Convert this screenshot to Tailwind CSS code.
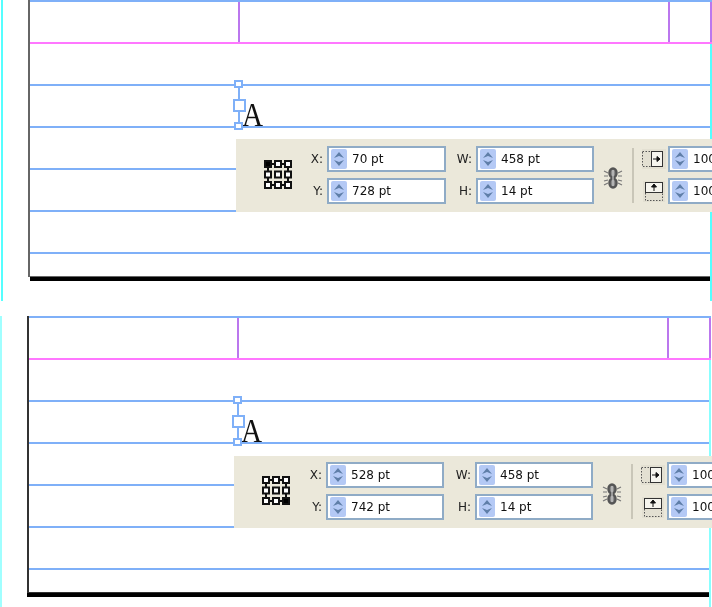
<!DOCTYPE html>
<html>
<head>
<meta charset="utf-8">
<script src="https://cdn.jsdelivr.net/npm/@tailwindcss/browser@4"></script>
</head>
<body class="bg-white">
<div class="w-[712px] h-[607px] overflow-hidden bg-white font-['DejaVu_Sans',sans-serif]">

<!-- SPREAD 1 -->
<section class="relative h-[316px] flex items-start overflow-hidden">
  <div class="ml-px w-[2px] h-[301px] bg-[#55ffff] shrink-0"></div>
  <div class="ml-[25px] w-[700px] h-[277px] shrink-0 border-l-2 border-b border-[#666666] shadow-[2px_4px_0_#000] flex flex-col gap-[40px]">
    <div class="h-[44px] flex flex-col">
      <div class="h-[2px] bg-[#7fb0f8]"></div>
      <div class="h-[40px] flex">
        <div class="w-[208px]"></div><div class="w-[2px] bg-[#bb77ee]"></div>
        <div class="w-[428px]"></div><div class="w-[2px] bg-[#bb77ee]"></div>
        <div class="w-[40px]"></div><div class="w-[2px] bg-[#bb77ee]"></div>
      </div>
      <div class="h-[2px] bg-[#ff77ff] shrink-0"></div>
    </div>
    <div class="h-[2px] bg-[#7fb0f8]"></div>
    <div class="h-[2px] bg-[#7fb0f8]"></div>
    <div class="h-[2px] bg-[#7fb0f8]"></div>
    <div class="h-[2px] bg-[#7fb0f8]"></div>
    <div class="h-[2px] bg-[#7fb0f8]"></div>
  </div>
  <div class="absolute left-[710px] top-[44px] w-[2px] h-[257px] bg-[#55ffff]"></div>

  <!-- selection handles and glyph -->
  <div class="absolute left-[238px] top-[84px] w-[2px] h-[42px] bg-[#7fb0f8]"></div>
  <div class="absolute left-[242px] top-[95px] origin-left scale-x-[0.86] text-[34px] leading-[40px] text-[#111] font-['Liberation_Serif',serif]">A</div>
  <div class="absolute left-[234px] top-[80px] w-[9px] h-[8px] border-2 border-[#7fb0f8] bg-white"></div>
  <div class="absolute left-[233px] top-[99px] w-[13px] h-[13px] border-2 border-[#7fb0f8] bg-white"></div>
  <div class="absolute left-[234px] top-[122px] w-[9px] h-[8px] border-2 border-[#7fb0f8] bg-white"></div>

  <!-- control panel -->
  <div class="absolute left-[236px] top-[139px] right-0 h-[73px] bg-[#ebe8da] pt-[7px] flex items-start overflow-hidden blur-[0.3px]">
    <svg class="ml-[28px] mt-[14px] shrink-0" width="29" height="29" viewBox="0 0 29 29">
      <path d="M4 4H24V25H4ZM4 14.500H8M20 14.500H24M14 4V8M14 21V25" fill="none" stroke="#111" stroke-width="2"/>
      <g fill="#fff" stroke="#111" stroke-width="2">
        <rect x="1" y="1" width="6" height="6" fill="#000"/><rect x="11" y="1" width="6" height="6"/><rect x="21" y="1" width="6" height="6"/>
        <rect x="1" y="11.500" width="6" height="6"/><rect x="11" y="11.500" width="6" height="6"/><rect x="21" y="11.500" width="6" height="6"/>
        <rect x="1" y="22" width="6" height="6"/><rect x="11" y="22" width="6" height="6"/><rect x="21" y="22" width="6" height="6"/>
      </g>
    </svg>
    <div class="flex flex-col gap-[6px] shrink-0 text-[12px] text-[#222]">
      <div class="flex items-center"><span class="w-[30px] text-right">X:</span><div class="ml-[4px] w-[119px] h-[26px] bg-white border-2 border-[#8fabc6] flex items-center pl-[2px]"><div class="w-[16px] h-[20px] rounded-[2px] bg-[#b4c9f5] flex items-center justify-center"><svg width="12" height="16" viewBox="0 0 12 16"><path d="M1 7 6 1 11 7 6 5ZM1 9 6 15 11 9 6 11Z" fill="#5f7ea8"/></svg></div><span class="ml-[5px] text-[#111]">70 pt</span></div></div>
      <div class="flex items-center"><span class="w-[30px] text-right">Y:</span><div class="ml-[4px] w-[119px] h-[26px] bg-white border-2 border-[#8fabc6] flex items-center pl-[2px]"><div class="w-[16px] h-[20px] rounded-[2px] bg-[#b4c9f5] flex items-center justify-center"><svg width="12" height="16" viewBox="0 0 12 16"><path d="M1 7 6 1 11 7 6 5ZM1 9 6 15 11 9 6 11Z" fill="#5f7ea8"/></svg></div><span class="ml-[5px] text-[#111]">728 pt</span></div></div>
    </div>
    <div class="flex flex-col gap-[6px] shrink-0 text-[12px] text-[#222]">
      <div class="flex items-center"><span class="w-[26px] text-right">W:</span><div class="ml-[4px] w-[118px] h-[26px] bg-white border-2 border-[#8fabc6] flex items-center pl-[2px]"><div class="w-[16px] h-[20px] rounded-[2px] bg-[#b4c9f5] flex items-center justify-center"><svg width="12" height="16" viewBox="0 0 12 16"><path d="M1 7 6 1 11 7 6 5ZM1 9 6 15 11 9 6 11Z" fill="#5f7ea8"/></svg></div><span class="ml-[5px] text-[#111]">458 pt</span></div></div>
      <div class="flex items-center"><span class="w-[26px] text-right">H:</span><div class="ml-[4px] w-[118px] h-[26px] bg-white border-2 border-[#8fabc6] flex items-center pl-[2px]"><div class="w-[16px] h-[20px] rounded-[2px] bg-[#b4c9f5] flex items-center justify-center"><svg width="12" height="16" viewBox="0 0 12 16"><path d="M1 7 6 1 11 7 6 5ZM1 9 6 15 11 9 6 11Z" fill="#5f7ea8"/></svg></div><span class="ml-[5px] text-[#111]">14 pt</span></div></div>
    </div>
    <svg class="ml-[9px] mt-[21px] shrink-0" width="20" height="22" viewBox="0 0 20 22">
      <g fill="#8a8a8a" stroke="#555" stroke-width="2.500"><ellipse cx="10" cy="6" rx="3.500" ry="4.500"/><ellipse cx="10" cy="16" rx="3.500" ry="4.500"/></g>
      <path d="M10 3V19" stroke="#ddd" stroke-width="1"/>
      <path d="M1 4 5 6M1 9H5M1 14 5 13M1 18 5 16M19 4 15 6M19 9H15M19 14 15 13M19 18 15 16" stroke="#777" stroke-width="1.200"/>
    </svg>
    <div class="ml-[9px] w-[2px] h-[55px] mt-[2px] bg-[#c9c6b8] shrink-0"></div>
    <div class="ml-[8px] w-[26px] flex flex-col shrink-0">
      <svg width="24" height="20" viewBox="0 0 24 20" class="mt-[3px]"><rect width="24" height="20" fill="#e3e0d2"/><rect x="0.500" y="2.500" width="10" height="15" fill="none" stroke="#555" stroke-dasharray="1.500 1.500"/><rect x="9.500" y="2.500" width="11" height="15" fill="#f6f5ee" stroke="#333"/><path d="M11 10H17M15 7.500 18 10 15 12.500Z" stroke="#111" fill="#111"/></svg>
      <svg width="22" height="21" viewBox="0 0 22 21" class="mt-[12px] ml-[1px]"><rect width="22" height="21" fill="#e3e0d2"/><rect x="2.500" y="11.500" width="17" height="8" fill="none" stroke="#555" stroke-dasharray="1.500 1.500"/><rect x="2.500" y="1.500" width="17" height="10" fill="#f6f5ee" stroke="#333"/><path d="M11 10V4M8.500 6 11 3 13.500 6Z" stroke="#111" fill="#111"/></svg>
    </div>
    <div class="flex flex-col gap-[6px] shrink-0 text-[12px] text-[#222]">
      <div class="w-[118px] h-[26px] bg-white border-2 border-[#8fabc6] flex items-center pl-[2px]"><div class="w-[16px] h-[20px] rounded-[2px] bg-[#b4c9f5] flex items-center justify-center"><svg width="12" height="16" viewBox="0 0 12 16"><path d="M1 7 6 1 11 7 6 5ZM1 9 6 15 11 9 6 11Z" fill="#5f7ea8"/></svg></div><span class="ml-[5px] text-[#111]">100%</span></div>
      <div class="w-[118px] h-[26px] bg-white border-2 border-[#8fabc6] flex items-center pl-[2px]"><div class="w-[16px] h-[20px] rounded-[2px] bg-[#b4c9f5] flex items-center justify-center"><svg width="12" height="16" viewBox="0 0 12 16"><path d="M1 7 6 1 11 7 6 5ZM1 9 6 15 11 9 6 11Z" fill="#5f7ea8"/></svg></div><span class="ml-[5px] text-[#111]">100%</span></div>
    </div>
  </div>
</section>

<!-- SPREAD 2 -->
<section class="relative h-[291px] flex items-start overflow-hidden">
  <div class="w-[2px] h-[291px] bg-[#a0ffff] shrink-0"></div>
  <div class="ml-[25px] w-[684px] h-[277px] shrink-0 border-l-2 border-b border-[#333333] shadow-[0_4px_0_#000] flex flex-col gap-[40px]">
    <div class="h-[44px] flex flex-col">
      <div class="h-[2px] bg-[#7fb0f8]"></div>
      <div class="h-[40px] flex">
        <div class="w-[208px]"></div><div class="w-[2px] bg-[#bb77ee]"></div>
        <div class="w-[428px]"></div><div class="w-[2px] bg-[#bb77ee]"></div>
        <div class="w-[40px]"></div><div class="w-[2px] bg-[#bb77ee]"></div>
      </div>
      <div class="h-[2px] bg-[#ff77ff] shrink-0"></div>
    </div>
    <div class="h-[2px] bg-[#7fb0f8]"></div>
    <div class="h-[2px] bg-[#7fb0f8]"></div>
    <div class="h-[2px] bg-[#7fb0f8]"></div>
    <div class="h-[2px] bg-[#7fb0f8]"></div>
    <div class="h-[2px] bg-[#7fb0f8]"></div>
  </div>
  <div class="absolute left-[709px] top-[44px] w-[2px] h-[247px] bg-[#88ffff]"></div>

  <div class="absolute left-[237px] top-[84px] w-[2px] h-[42px] bg-[#7fb0f8]"></div>
  <div class="absolute left-[241px] top-[95px] origin-left scale-x-[0.86] text-[34px] leading-[40px] text-[#111] font-['Liberation_Serif',serif]">A</div>
  <div class="absolute left-[233px] top-[80px] w-[9px] h-[8px] border-2 border-[#7fb0f8] bg-white"></div>
  <div class="absolute left-[232px] top-[99px] w-[13px] h-[13px] border-2 border-[#7fb0f8] bg-white"></div>
  <div class="absolute left-[233px] top-[122px] w-[9px] h-[8px] border-2 border-[#7fb0f8] bg-white"></div>

  <div class="absolute left-[234px] top-[140px] right-0 h-[72px] bg-[#ebe8da] pt-[6px] flex items-start overflow-hidden blur-[0.3px]">
    <svg class="ml-[28px] mt-[14px] shrink-0" width="29" height="29" viewBox="0 0 29 29">
      <path d="M4 4H24V25H4ZM4 14.500H8M20 14.500H24M14 4V8M14 21V25" fill="none" stroke="#111" stroke-width="2"/>
      <g fill="#fff" stroke="#111" stroke-width="2">
        <rect x="1" y="1" width="6" height="6"/><rect x="11" y="1" width="6" height="6"/><rect x="21" y="1" width="6" height="6"/>
        <rect x="1" y="11.500" width="6" height="6"/><rect x="11" y="11.500" width="6" height="6"/><rect x="21" y="11.500" width="6" height="6"/>
        <rect x="1" y="22" width="6" height="6"/><rect x="11" y="22" width="6" height="6"/><rect x="21" y="22" width="6" height="6" fill="#000"/>
      </g>
    </svg>
    <div class="flex flex-col gap-[6px] shrink-0 text-[12px] text-[#222]">
      <div class="flex items-center"><span class="w-[31px] text-right">X:</span><div class="ml-[4px] w-[118px] h-[26px] bg-white border-2 border-[#8fabc6] flex items-center pl-[2px]"><div class="w-[16px] h-[20px] rounded-[2px] bg-[#b4c9f5] flex items-center justify-center"><svg width="12" height="16" viewBox="0 0 12 16"><path d="M1 7 6 1 11 7 6 5ZM1 9 6 15 11 9 6 11Z" fill="#5f7ea8"/></svg></div><span class="ml-[5px] text-[#111]">528 pt</span></div></div>
      <div class="flex items-center"><span class="w-[31px] text-right">Y:</span><div class="ml-[4px] w-[118px] h-[26px] bg-white border-2 border-[#8fabc6] flex items-center pl-[2px]"><div class="w-[16px] h-[20px] rounded-[2px] bg-[#b4c9f5] flex items-center justify-center"><svg width="12" height="16" viewBox="0 0 12 16"><path d="M1 7 6 1 11 7 6 5ZM1 9 6 15 11 9 6 11Z" fill="#5f7ea8"/></svg></div><span class="ml-[5px] text-[#111]">742 pt</span></div></div>
    </div>
    <div class="flex flex-col gap-[6px] shrink-0 text-[12px] text-[#222]">
      <div class="flex items-center"><span class="w-[27px] text-right">W:</span><div class="ml-[4px] w-[118px] h-[26px] bg-white border-2 border-[#8fabc6] flex items-center pl-[2px]"><div class="w-[16px] h-[20px] rounded-[2px] bg-[#b4c9f5] flex items-center justify-center"><svg width="12" height="16" viewBox="0 0 12 16"><path d="M1 7 6 1 11 7 6 5ZM1 9 6 15 11 9 6 11Z" fill="#5f7ea8"/></svg></div><span class="ml-[5px] text-[#111]">458 pt</span></div></div>
      <div class="flex items-center"><span class="w-[27px] text-right">H:</span><div class="ml-[4px] w-[118px] h-[26px] bg-white border-2 border-[#8fabc6] flex items-center pl-[2px]"><div class="w-[16px] h-[20px] rounded-[2px] bg-[#b4c9f5] flex items-center justify-center"><svg width="12" height="16" viewBox="0 0 12 16"><path d="M1 7 6 1 11 7 6 5ZM1 9 6 15 11 9 6 11Z" fill="#5f7ea8"/></svg></div><span class="ml-[5px] text-[#111]">14 pt</span></div></div>
    </div>
    <svg class="ml-[9px] mt-[21px] shrink-0" width="20" height="22" viewBox="0 0 20 22">
      <g fill="#8a8a8a" stroke="#555" stroke-width="2.500"><ellipse cx="10" cy="6" rx="3.500" ry="4.500"/><ellipse cx="10" cy="16" rx="3.500" ry="4.500"/></g>
      <path d="M10 3V19" stroke="#ddd" stroke-width="1"/>
      <path d="M1 4 5 6M1 9H5M1 14 5 13M1 18 5 16M19 4 15 6M19 9H15M19 14 15 13M19 18 15 16" stroke="#777" stroke-width="1.200"/>
    </svg>
    <div class="ml-[9px] w-[2px] h-[55px] mt-[2px] bg-[#c9c6b8] shrink-0"></div>
    <div class="ml-[8px] w-[26px] flex flex-col shrink-0">
      <svg width="24" height="20" viewBox="0 0 24 20" class="mt-[3px]"><rect width="24" height="20" fill="#e3e0d2"/><rect x="0.500" y="2.500" width="10" height="15" fill="none" stroke="#555" stroke-dasharray="1.500 1.500"/><rect x="9.500" y="2.500" width="11" height="15" fill="#f6f5ee" stroke="#333"/><path d="M11 10H17M15 7.500 18 10 15 12.500Z" stroke="#111" fill="#111"/></svg>
      <svg width="22" height="21" viewBox="0 0 22 21" class="mt-[12px] ml-[1px]"><rect width="22" height="21" fill="#e3e0d2"/><rect x="2.500" y="11.500" width="17" height="8" fill="none" stroke="#555" stroke-dasharray="1.500 1.500"/><rect x="2.500" y="1.500" width="17" height="10" fill="#f6f5ee" stroke="#333"/><path d="M11 10V4M8.500 6 11 3 13.500 6Z" stroke="#111" fill="#111"/></svg>
    </div>
    <div class="flex flex-col gap-[6px] shrink-0 text-[12px] text-[#222]">
      <div class="w-[118px] h-[26px] bg-white border-2 border-[#8fabc6] flex items-center pl-[2px]"><div class="w-[16px] h-[20px] rounded-[2px] bg-[#b4c9f5] flex items-center justify-center"><svg width="12" height="16" viewBox="0 0 12 16"><path d="M1 7 6 1 11 7 6 5ZM1 9 6 15 11 9 6 11Z" fill="#5f7ea8"/></svg></div><span class="ml-[5px] text-[#111]">100%</span></div>
      <div class="w-[118px] h-[26px] bg-white border-2 border-[#8fabc6] flex items-center pl-[2px]"><div class="w-[16px] h-[20px] rounded-[2px] bg-[#b4c9f5] flex items-center justify-center"><svg width="12" height="16" viewBox="0 0 12 16"><path d="M1 7 6 1 11 7 6 5ZM1 9 6 15 11 9 6 11Z" fill="#5f7ea8"/></svg></div><span class="ml-[5px] text-[#111]">100%</span></div>
    </div>
  </div>
</section>
</div>
</body>
</html>
